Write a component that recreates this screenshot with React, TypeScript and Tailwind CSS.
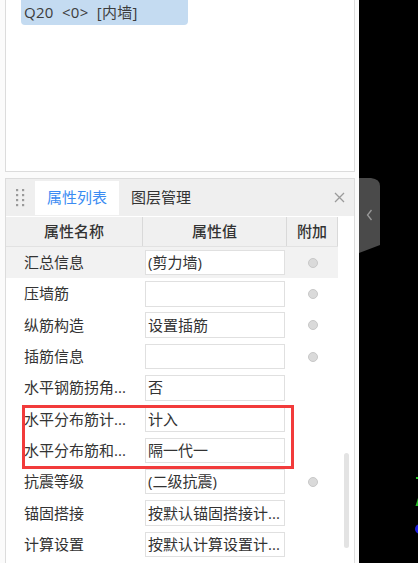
import React from "react";

interface Row {
  name: string;
  value: string;
  dot?: boolean;
  selected?: boolean;
}

const ROWS: Row[] = [
  { name: "汇总信息", value: "(剪力墙)", dot: true, selected: true },
  { name: "压墙筋", value: "", dot: true },
  { name: "纵筋构造", value: "设置插筋", dot: true },
  { name: "插筋信息", value: "", dot: true },
  { name: "水平钢筋拐角...", value: "否" },
  { name: "水平分布筋计...", value: "计入" },
  { name: "水平分布筋和...", value: "隔一代一" },
  { name: "抗震等级", value: "(二级抗震)", dot: true },
  { name: "锚固搭接", value: "按默认锚固搭接计..." },
  { name: "计算设置", value: "按默认计算设置计..." },
  { name: "", value: "" },
];

function DragHandle() {
  return (
    <svg width="9" height="18" viewBox="0 0 9 18" className="shrink-0">
      {[0, 1, 2, 3].map((r) =>
        [0, 1].map((c) => (
          <rect key={`${r}-${c}`} x={c * 6} y={r * 5} width="2.2" height="2.2" fill="#9a9a9a" />
        ))
      )}
    </svg>
  );
}

function CloseIcon() {
  return (
    <svg width="11" height="11" viewBox="0 0 11 11">
      <path d="M1 1L10 10M10 1L1 10" stroke="#9b9b9b" strokeWidth="1.3" />
    </svg>
  );
}

export default function App() {
  return (
    <div className="relative flex w-[418px] h-[563px] overflow-hidden bg-white text-[#333] font-['Open_Sans','Noto_Sans_CJK_SC',sans-serif]">
      {/* left docked panels */}
      <div className="w-[359px] shrink-0 flex flex-col pl-[5px] pr-[4px] bg-[#fbfbfb]">
        {/* component list */}
        <div className="h-[172px] shrink-0 border-x border-b border-[#dcdcdc] bg-white">
          <div className="ml-[15px] w-[167px] h-[25px] rounded-b-[4px] bg-[#c4dbf1] flex items-center pl-[3px] text-[15px] leading-none text-[#3c3c3c] [word-spacing:4px] tracking-[0.3px]">
            Q20 &lt;0&gt; [内墙]
          </div>
        </div>

        {/* properties panel */}
        <div className="mt-[6px] flex-1 border border-[#dcdcdc] bg-white flex flex-col">
          <div className="h-[37px] shrink-0 bg-[#efefef] flex items-center">
            <div className="w-[29px] flex justify-center">
              <DragHandle />
            </div>
            <div className="h-[34px] w-[84px] bg-white flex items-center justify-center text-[15px] text-[#3b8cf2]">
              属性列表
            </div>
            <div className="h-[34px] w-[84px] flex items-center justify-center text-[15px] text-[#333]">
              图层管理
            </div>
            <div className="flex-1" />
            <div className="w-[30px] flex justify-center">
              <CloseIcon />
            </div>
          </div>

          <div className="flex mt-[1px]">
            <div className="w-[332px] shrink-0 flex flex-col">
              {/* column header */}
              <div className="h-[30px] flex bg-[#f0f0f0] border-b border-[#e2e2e2] text-[15px] font-medium text-[#333]">
                <div className="w-[137px] flex items-center justify-center border-r border-[#d9d9d9]">属性名称</div>
                <div className="w-[144px] flex items-center justify-center border-r border-[#d9d9d9]">属性值</div>
                <div className="w-[51px] flex items-center justify-center border-r border-[#d9d9d9]">附加</div>
              </div>

              {ROWS.map((r, i) => (
                <div
                  key={i}
                  className={`h-[31.3px] shrink-0 flex items-center text-[15px] leading-none ${r.selected ? "bg-[#f2f2f2]" : ""}`}
                >
                  <div className="w-[137px] pl-[18px] whitespace-nowrap">{r.name}</div>
                  <div className="w-[144px] px-[2px]">
                    <div className="h-[25.5px] border border-[#e0e0e0] bg-white flex items-center pl-[2px] whitespace-nowrap overflow-hidden">
                      {r.value}
                    </div>
                  </div>
                  <div className="w-[51px] flex justify-center">
                    {r.dot && <div className="w-[10px] h-[10px] rounded-full bg-[#dadada] border border-[#c8c8c8]" />}
                  </div>
                </div>
              ))}
            </div>

            {/* scrollbar gutter */}
            <div className="flex-1 flex flex-col items-center">
              <div className="mt-[236px] w-[5px] h-[95px] rounded-full bg-[#e3e3e3]" />
            </div>
          </div>
        </div>
      </div>

      {/* drawing canvas */}
      <div className="relative flex-1 bg-black">
        <div className="mt-[178px]">
          <svg width="21" height="76" viewBox="0 0 21 76">
            <path d="M0 0H12Q21 1 21 8V67L0 75Z" fill="#4a4a4a" />
            <path d="M12.5 32L8.5 37L12.5 42" stroke="#9a9a9a" strokeWidth="1.3" fill="none" />
          </svg>
        </div>
        <svg className="absolute left-0 top-[470px]" width="59" height="70" viewBox="0 0 59 70">
          <rect x="57" y="7" width="2" height="2" fill="#27c627" />
          <path d="M59 28L56.5 36H59Z" fill="#22b422" />
          <circle cx="61" cy="59" r="5" fill="#1f1fe0" />
        </svg>
      </div>

      {/* red annotation box */}
      <div className="absolute left-[22px] top-[405px] w-[272px] h-[64px] border-[3px] border-[#f23b3b]" />
    </div>
  );
}
